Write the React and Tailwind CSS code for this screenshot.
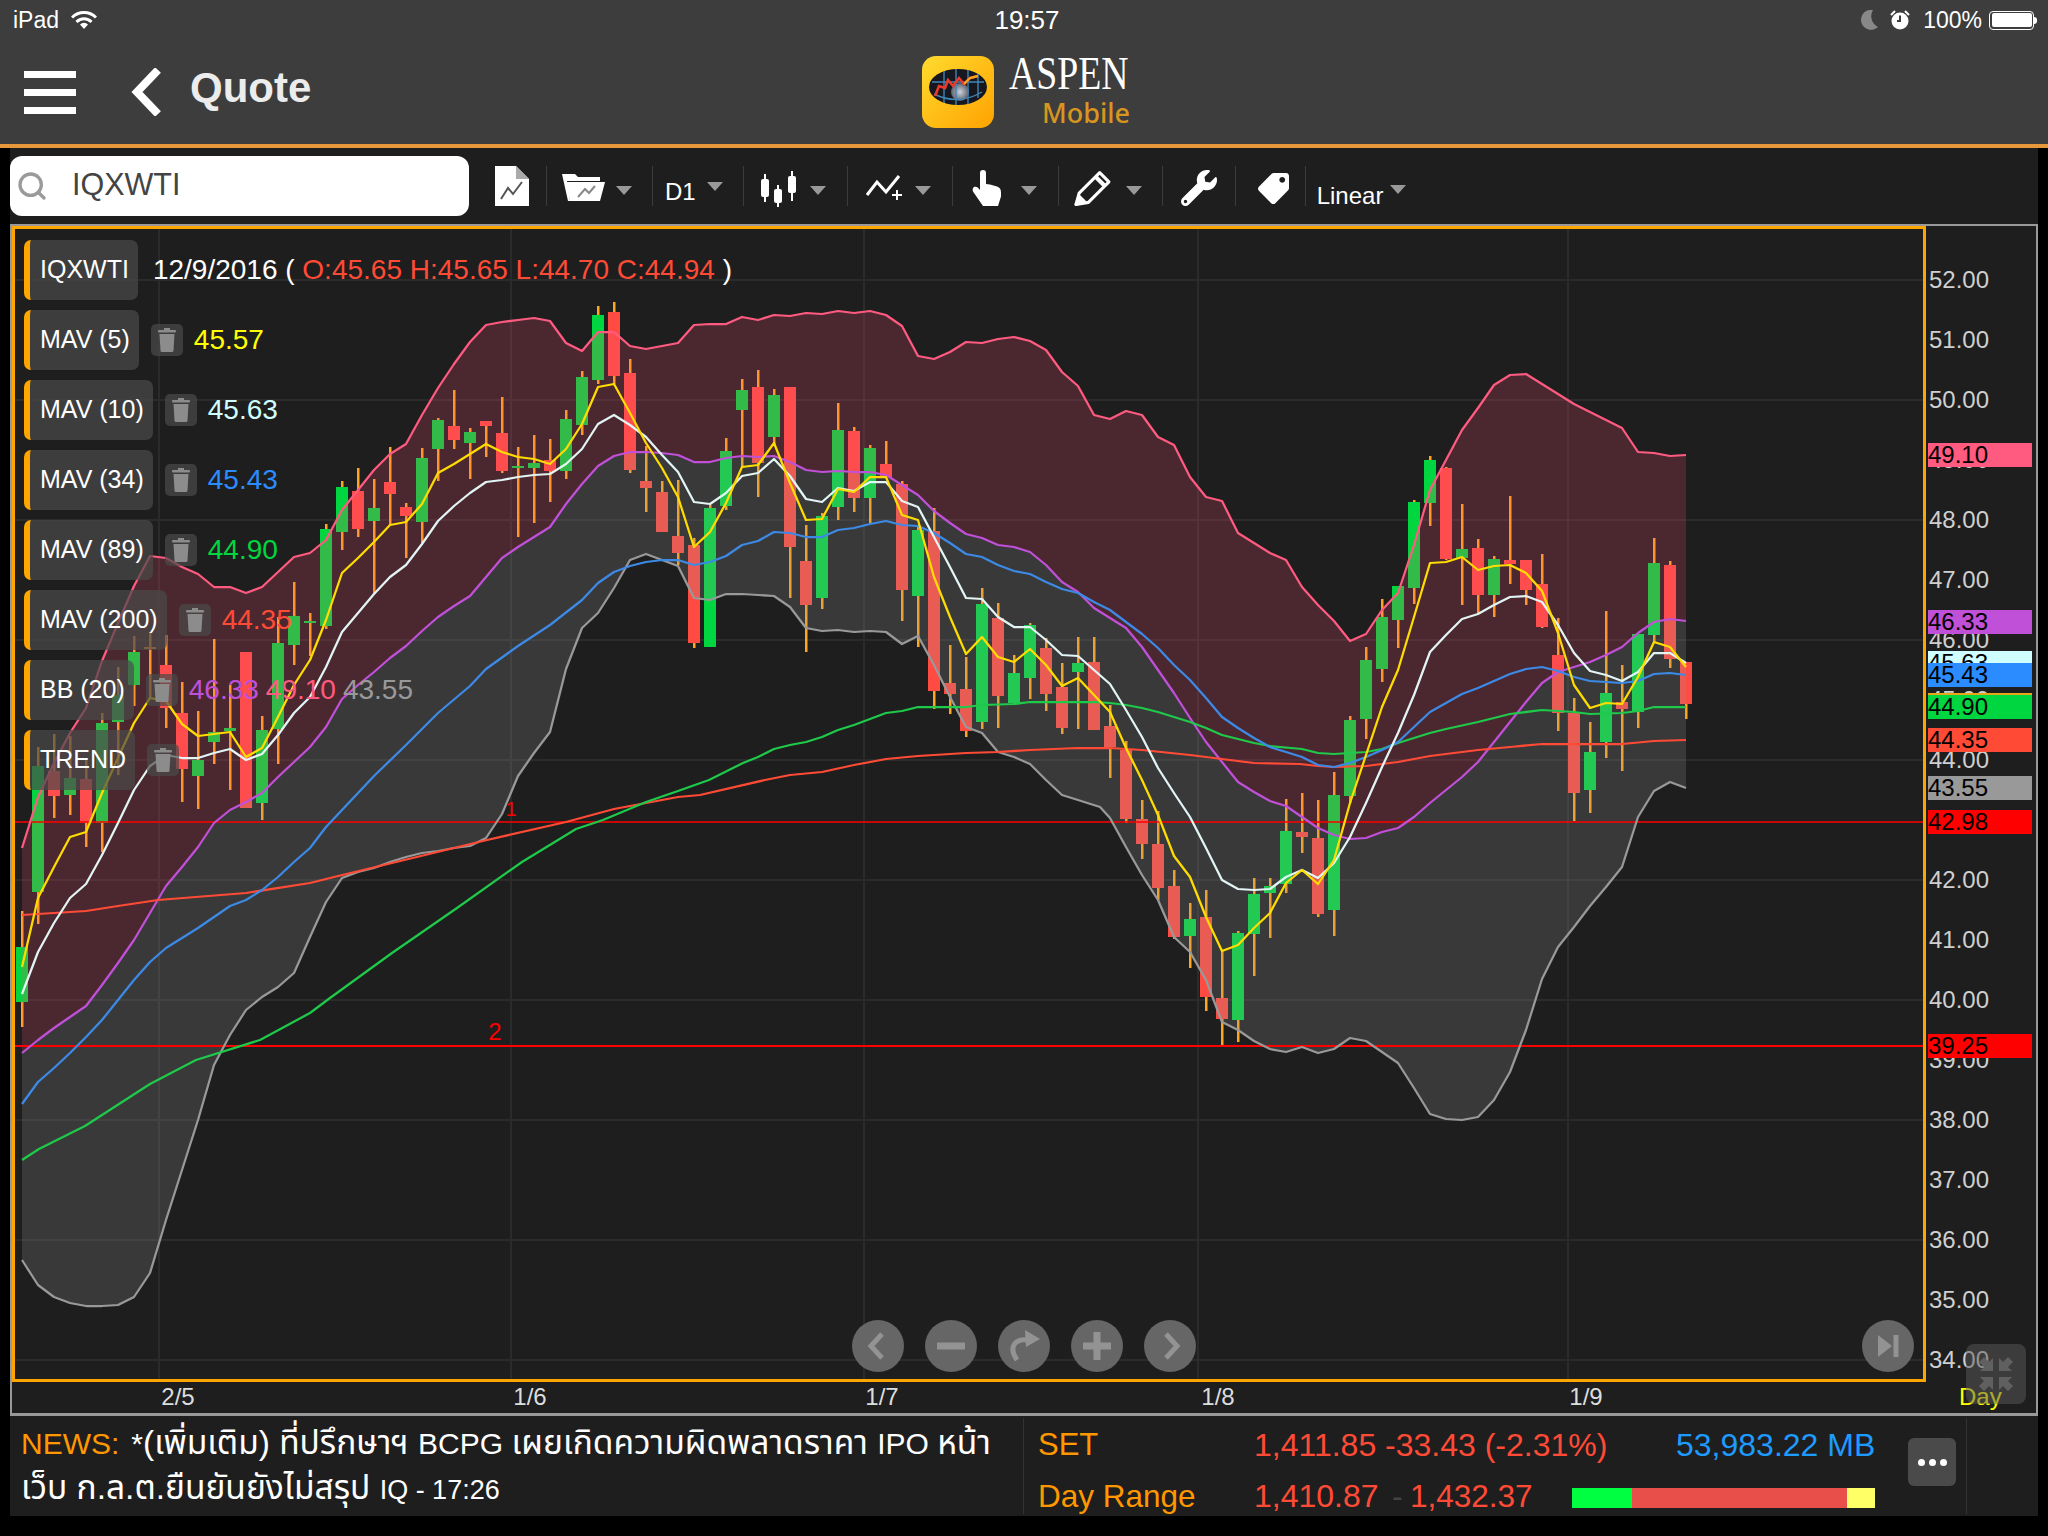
import { Search } from 'lucide-react';
import { FaWrench, FaTag } from 'react-icons/fa';

// page pixel data, read off the chart: [type, bodyTop, bodyBottom, wickTop, wickBottom]  1 green, 0 red, 2 doji
const CANDLES = [
  [1,947,1002,911,1027],[1,766,892,747,924],[0,771,796,734,818],[1,778,795,736,815],[0,779,823,760,847],
  [1,723,823,713,852],[1,695,722,667,775],[1,652,685,636,706],[2,647,649,632,697],[0,665,708,635,728],
  [0,713,769,682,802],[1,760,776,711,809],[1,732,742,639,764],[1,728,731,685,790],[0,652,808,652,808],
  [1,730,803,716,820],[1,643,729,617,764],[1,616,645,582,665],[1,621,623,613,656],[1,529,626,524,629],
  [1,487,532,481,550],[0,491,529,468,537],[1,508,521,479,594],[0,482,494,447,525],[0,507,516,503,558],
  [1,458,522,448,543],[1,420,449,418,481],[0,426,440,390,449],[1,432,443,428,479],[0,421,426,421,457],
  [0,433,471,397,473],[1,466,468,447,537],[1,463,468,435,523],[0,460,471,439,502],[1,419,471,410,479],
  [1,377,425,371,435],[1,315,380,306,384],[0,312,376,302,384],[0,373,470,359,473],[0,481,488,446,512],
  [0,492,532,481,532],[0,536,553,480,565],[0,545,643,538,648],[1,508,647,505,647],[1,451,506,438,510],
  [1,390,410,379,467],[0,387,463,370,497],[1,395,437,389,445],[0,387,547,387,598],[0,561,605,525,652],
  [1,516,598,513,609],[1,430,507,403,520],[0,431,498,427,512],[1,448,498,445,523],[0,464,477,441,477],
  [0,484,590,481,621],[1,530,596,527,647],[0,531,691,508,709],[0,683,694,645,714],[0,689,731,657,737],
  [1,604,722,588,729],[0,618,696,603,728],[1,673,703,655,705],[1,625,678,623,699],[0,648,694,638,711],
  [0,687,728,663,734],[1,663,672,637,729],[0,662,730,637,730],[0,726,747,705,778],[0,750,819,741,823],
  [0,819,844,800,859],[0,844,888,811,900],[0,886,937,870,939],[1,919,936,903,968],[0,917,997,890,1011],
  [0,998,1019,950,1045],[1,933,1020,931,1042],[1,894,934,878,976],[1,886,893,878,938],[1,831,884,799,893],
  [0,832,837,793,853],[0,838,914,800,917],[1,795,910,772,936],[1,720,796,716,803],[1,660,719,647,739],
  [1,617,669,599,682],[1,586,620,586,648],[1,502,588,500,604],[1,460,503,456,526],[0,468,559,467,560],
  [1,549,558,504,605],[0,548,595,539,614],[1,559,595,556,617],[0,560,564,496,584],[0,560,590,560,605],
  [0,584,627,554,628],[0,655,713,618,731],[0,713,793,698,821],[1,752,790,722,813],[1,693,742,611,758],
  [0,702,709,665,771],[1,634,712,634,728],[1,563,635,538,643],[0,565,659,561,668],[0,662,704,662,719],
];

const UPPER = '22,848 38,797 54,763 70,733 86,708 102,661 118,623 134,586 150,556 166,558 182,567 198,574 214,587 230,587 246,593 262,587 278,572 294,557 310,553 326,540 342,510 358,490 374,470 390,454 406,444 422,415 438,388 454,364 470,342 486,325 502,322 518,320 534,318 550,321 566,343 582,351 598,332 614,332 630,346 646,349 662,346 678,343 694,325 710,324 726,324 742,317 758,320 774,315 790,316 806,313 822,314 838,311 854,313 870,311 886,315 902,326 918,356 934,359 950,352 966,342 982,343 998,339 1014,337 1030,341 1046,350 1062,372 1078,386 1094,415 1110,419 1126,411 1142,415 1158,437 1174,445 1190,477 1206,497 1222,501 1238,533 1254,543 1270,553 1286,560 1302,587 1318,605 1334,621 1350,641 1366,634 1382,610 1398,593 1414,545 1430,490 1446,460 1462,430 1478,408 1494,385 1510,375 1526,374 1542,384 1558,394 1574,404 1590,412 1606,420 1622,428 1638,452 1654,453 1670,456 1686,455';
const MID = '22,1053 38,1040 54,1028 70,1017 86,1006 102,985 118,963 134,940 150,913 166,886 182,867 198,847 214,823 230,810 246,802 262,793 278,777 294,762 310,747 326,727 342,699 358,685 374,672 390,658 406,646 422,631 438,617 454,606 470,596 486,577 502,558 518,547 534,537 550,527 566,504 582,484 598,466 614,456 630,452 646,452 662,453 678,455 694,462 710,462 726,458 742,456 758,457 774,456 790,462 806,470 822,472 838,471 854,472 870,472 886,475 902,485 918,495 934,511 950,523 966,534 982,538 998,545 1014,547 1030,552 1046,565 1062,582 1078,592 1094,608 1110,618 1126,628 1142,647 1158,670 1174,693 1190,718 1206,742 1222,762 1238,782 1254,792 1270,801 1286,806 1302,817 1318,828 1334,835 1350,839 1366,838 1382,832 1398,828 1414,817 1430,803 1446,790 1462,777 1478,762 1494,742 1510,722 1526,702 1542,683 1558,672 1574,667 1590,662 1606,655 1622,647 1638,633 1654,622 1670,619 1686,621';
const LOWER = '22,1260 38,1285 54,1297 70,1303 86,1306 102,1306 118,1305 134,1297 150,1273 166,1220 182,1170 198,1120 214,1065 230,1035 246,1010 262,997 278,987 294,973 310,937 326,902 342,878 358,872 374,868 390,862 406,857 422,853 438,851 454,848 470,846 486,838 502,814 518,776 534,753 550,732 566,669 582,628 598,613 614,588 630,560 646,554 662,560 678,566 694,598 710,600 726,594 742,594 758,595 774,596 790,607 806,628 822,631 838,630 854,632 870,631 886,632 902,644 918,636 934,665 950,697 966,727 982,733 998,752 1014,757 1030,764 1046,780 1062,795 1078,800 1100,807 1110,818 1126,847 1142,875 1158,900 1174,937 1190,952 1206,980 1222,1022 1238,1030 1254,1041 1270,1049 1286,1052 1302,1047 1318,1053 1334,1049 1350,1038 1366,1041 1382,1052 1398,1063 1414,1088 1430,1114 1446,1119 1462,1120 1478,1117 1494,1100 1510,1072 1526,1030 1542,979 1558,947 1574,927 1590,906 1606,887 1622,867 1638,817 1654,791 1670,782 1686,788';
const MAV5 = '22,967 38,898 54,867 70,837 86,832 102,793 118,758 134,723 150,698 166,701 182,724 198,736 214,734 230,732 246,757 262,748 278,717 294,685 310,660 326,620 342,573 358,558 374,542 390,525 406,522 422,504 438,473 454,464 470,454 486,444 502,452 518,457 534,459 550,464 566,449 582,424 598,387 614,384 630,413 646,443 662,468 678,497 694,547 710,532 726,503 742,467 758,465 774,443 790,483 806,520 822,519 838,489 854,492 870,477 886,477 902,515 918,520 934,577 950,617 966,654 982,637 998,657 1014,662 1030,649 1046,665 1062,686 1078,678 1094,695 1110,712 1126,748 1142,780 1158,815 1174,856 1190,877 1206,917 1222,951 1238,945 1254,928 1270,913 1286,883 1302,870 1318,884 1334,860 1350,803 1366,755 1382,707 1398,670 1414,617 1430,563 1446,562 1462,557 1478,570 1494,566 1510,565 1526,573 1542,591 1558,633 1574,685 1590,708 1606,703 1622,704 1638,677 1654,642 1670,647 1686,667';
const MAV10 = '22,994 38,952 54,923 70,898 86,884 102,855 118,823 134,790 150,766 166,755 182,758 198,758 214,753 230,749 246,760 262,754 278,735 294,713 310,697 326,667 342,632 358,613 374,594 390,577 406,565 422,544 438,521 454,506 470,493 486,482 502,480 518,477 534,475 550,474 566,464 582,449 598,424 614,415 630,425 646,437 662,455 678,472 694,502 710,504 726,493 742,476 758,473 774,459 790,476 806,499 822,502 838,488 854,491 870,482 886,482 902,501 918,507 934,537 950,567 966,598 982,599 998,617 1014,627 1030,627 1046,640 1062,655 1078,656 1094,670 1110,684 1126,710 1142,737 1158,768 1174,793 1190,817 1206,848 1222,880 1238,889 1254,890 1270,889 1286,877 1302,870 1318,878 1334,863 1350,837 1366,803 1382,767 1398,733 1414,695 1430,652 1446,635 1462,619 1478,614 1494,605 1510,597 1526,596 1542,602 1558,625 1574,653 1590,671 1606,675 1622,681 1638,672 1654,653 1670,653 1686,663';
const MAV34 = '22,1104 38,1082 54,1068 70,1053 86,1037 102,1020 118,1000 134,980 150,962 166,948 182,938 198,928 214,917 230,906 246,900 262,890 278,877 294,862 310,848 326,827 342,810 374,776 406,745 438,713 470,686 486,669 518,646 550,625 582,600 598,583 614,572 630,566 646,562 662,560 678,560 694,565 710,562 726,556 742,545 758,541 774,532 790,533 806,537 822,537 838,530 854,528 870,524 886,521 902,525 918,526 934,533 950,543 966,554 982,557 998,565 1014,571 1030,574 1046,582 1062,589 1078,593 1094,602 1110,610 1126,622 1142,634 1158,648 1174,665 1190,680 1206,698 1222,717 1238,728 1254,738 1270,747 1286,752 1302,757 1318,765 1334,767 1350,763 1366,757 1382,750 1398,742 1414,727 1430,712 1446,703 1462,694 1478,688 1494,681 1510,674 1526,669 1542,667 1558,671 1574,677 1590,681 1606,682 1622,683 1638,681 1654,674 1670,673 1686,675';
const MAV89 = '22,1160 39,1149 85,1126 150,1084 196,1060 260,1040 310,1013 330,998 392,953 457,908 522,862 576,829 603,820 646,802 678,791 709,780 743,763 758,757 774,749 790,745 806,742 822,737 838,730 854,725 870,719 886,713 902,711 918,707 966,707 982,705 1014,704 1030,702 1094,702 1110,703 1126,705 1142,708 1158,712 1174,717 1190,722 1206,728 1222,735 1238,739 1254,743 1270,746 1302,749 1318,753 1334,754 1366,752 1382,749 1398,743 1414,738 1430,733 1446,729 1478,722 1510,714 1542,710 1574,712 1590,714 1622,713 1638,711 1654,707 1686,707';
const MAV200 = '22,915 86,911 118,906 158,900 246,893 310,883 330,878 487,840 566,822 614,809 678,797 700,795 765,780 790,775 822,772 854,765 886,759 918,756 966,753 998,752 1030,750 1078,748 1110,748 1142,750 1190,755 1222,759 1254,763 1300,764 1318,766 1334,767 1366,766 1398,762 1430,756 1478,750 1510,747 1542,744 1574,744 1622,744 1654,741 1686,740';

const band = (a, b) => `${a} ${b.split(' ').reverse().join(' ')}`;
const priceY = (p) => 280 + (52 - p) * 60;

const GRID_X = [159, 511, 864, 1198, 1568];
const GRID_PRICES = [52, 50, 48, 46, 44, 42, 40, 38, 36, 34];
const AXIS_PRICES = [52, 51, 50, 49, 48, 47, 46, 45, 44, 43, 42, 41, 40, 39, 38, 37, 36, 35, 34];
const PRICE_TAGS = [
  ['49.10', 455, 'bg-[#ff5a80]'],
  ['46.33', 622, 'bg-[#c050d8]'],
  ['45.63', 663, 'bg-[#d0ffff]'],
  ['45.43', 675, 'bg-[#2a8cff]'],
  ['44.94', 705, 'bg-[#e6a817]'],
  ['44.90', 707, 'bg-[#00d63f]'],
  ['44.35', 740, 'bg-[#ff4b36]'],
  ['43.55', 788, 'bg-[#999999]'],
  ['42.98', 822, 'bg-[#ff0000]'],
  ['39.25', 1046, 'bg-[#ff0000]'],
];
const DATE_LABELS = [['2/5', 178], ['1/6', 530], ['1/7', 882], ['1/8', 1218], ['1/9', 1586]];

// ============ ICONS ============
function Caret() {
  return (
    <svg width="16" height="9" viewBox="0 0 16 9"><path d="M0 0h16L8 9z" fill="#999" /></svg>
  );
}

function DocIcon() {
  return (
    <svg width="34" height="40" viewBox="0 0 34 40">
      <path d="M0 0h21l13 13v27H0z" fill="#fff" />
      <path d="M21 0v13h13z" fill="#aaa" />
      <polyline points="6,33 13,22 18,28 27,16" fill="none" stroke="#555" strokeWidth="2" />
    </svg>
  );
}

function FolderIcon() {
  return (
    <svg width="43" height="30" viewBox="0 0 43 30">
      <path d="M0 3h13l3 3h22v4H5l3 20H6z" fill="#fff" />
      <path d="M3 11h40l-5 19H8z" fill="#fff" />
      <polyline points="16,26 23,18 27,22 33,15" fill="none" stroke="#888" strokeWidth="2" />
    </svg>
  );
}

function CandleIcon() {
  return (
    <svg width="35" height="36" viewBox="0 0 35 36" fill="#fff">
      <rect x="3" y="3" width="2" height="28" />
      <rect x="0" y="8" width="8" height="18" rx="2" />
      <rect x="16" y="14" width="2" height="22" />
      <rect x="13" y="18" width="8" height="14" rx="2" />
      <rect x="30" y="0" width="2" height="30" />
      <rect x="27" y="5" width="8" height="17" rx="2" />
    </svg>
  );
}

function LineToolIcon() {
  return (
    <svg width="38" height="26" viewBox="0 0 38 26" fill="none" stroke="#fff" strokeWidth="3">
      <polyline points="1,20 11,7 20,17 33,1" />
      <path d="M31 15v10M26 20h10" strokeWidth="2" />
    </svg>
  );
}

function HandIcon() {
  return (
    <svg width="30" height="36" viewBox="0 0 30 36" fill="#fff">
      <path d="M8 3a3 3 0 0 1 6 0v11l4 .5 7 2c3 1 4 3 4 6v4l-3 9.500H11L2 23c-2-2.500-1.500-5 0-6 2-1 4 0 6 3z" />
    </svg>
  );
}

function PencilIcon() {
  return (
    <svg width="38" height="38" viewBox="0 0 37 36" fill="none" stroke="#fff" strokeWidth="3" strokeLinejoin="round">
      <path d="M2 34l3-11L25 3l9 9-20 20z" />
      <path d="M21 7l9 9" strokeWidth="4" />
      <path d="M2 34l3-8 5 5z" fill="#fff" />
    </svg>
  );
}

function TrashIcon() {
  return (
    <svg width="18" height="24" viewBox="0 0 18 24" fill="#8c8c8c">
      <rect x="0" y="2" width="18" height="2.5" rx="1" />
      <rect x="6" y="0" width="6" height="2" />
      <path d="M1.500 6h15l-1 16.500a1.500 1.500 0 0 1-1.500 1.500H4a1.500 1.500 0 0 1-1.500-1.500z" />
    </svg>
  );
}

function LogoIcon() {
  return (
    <svg width="72" height="72" viewBox="0 0 72 72">
      <defs>
        <linearGradient id="logoBg" x1="0" y1="0" x2="1" y2="1">
          <stop offset="0" stopColor="#ffdb2e" />
          <stop offset="1" stopColor="#ffa200" />
        </linearGradient>
        <radialGradient id="logoBall" cx="0.5" cy="0.5" r="0.5">
          <stop offset="0" stopColor="#cdd2dc" />
          <stop offset="1" stopColor="#5d6270" />
        </radialGradient>
      </defs>
      <rect width="72" height="72" rx="14" fill="url(#logoBg)" />
      <ellipse cx="36" cy="31" rx="29" ry="18" fill="#17171f" />
      <circle cx="38" cy="36" r="9" fill="url(#logoBall)" />
      <path d="M22 15v32M34 13v36M46 14v34M56 18v24M10 26h52M12 38q24 12 48-2" fill="none" stroke="#3f86b8" strokeWidth="1.4" />
      <polyline points="13,40 17,30 23,32 26,24 31,30 37,22 42,28 48,22 56,20" fill="none" stroke="#e8392b" strokeWidth="2.6" />
      <polyline points="42,28 48,22 56,20" fill="none" stroke="#f7a11c" strokeWidth="2.4" />
    </svg>
  );
}

// ============ HEADER ============
function StatusBar() {
  return (
    <div className="h-[40px] grid grid-cols-3 items-center text-white">
      <div className="flex items-center pl-[13px] gap-[12px] text-[23px]">
        <span>iPad</span>
        <svg width="26" height="18" viewBox="0 0 26 18" fill="none" stroke="#fff" strokeWidth="3">
          <path d="M1 6.500a17 17 0 0 1 24 0" />
          <path d="M5.500 11a10.500 10.500 0 0 1 15 0" />
          <path d="M13 18l-4-4.500a5.500 5.500 0 0 1 8 0z" fill="#fff" stroke="none" />
        </svg>
      </div>
      <div className="text-center pl-[6px] text-[26px]">19:57</div>
      <div className="flex items-center justify-end pr-[11px] text-[23px]">
        <svg width="19" height="20" viewBox="0 0 19 20"><path d="M14 0a10 10 0 1 0 5 17A12 12 0 0 1 14 0z" fill="#888" /></svg>
        <svg className="ml-[12px]" width="20" height="20" viewBox="0 0 20 20">
          <circle cx="10" cy="11" r="8.500" fill="#fff" />
          <path d="M10 5.500V11h-3" fill="none" stroke="#3d3d3d" strokeWidth="2" />
          <path d="M1 5l4-4M19 5l-4-4" stroke="#fff" strokeWidth="2" />
        </svg>
        <span className="ml-[13px]">100%</span>
        <div className="ml-[7px] w-[45px] h-[19px] border border-white rounded-[4px] p-[1.5px]">
          <div className="w-full h-full bg-white rounded-[2px]" />
        </div>
        <div className="w-[3px] h-[7px] bg-white rounded-r-sm" />
      </div>
    </div>
  );
}

function NavBar() {
  return (
    <div className="h-[104px] flex items-center">
      <div className="w-[922px] flex items-center pl-[24px]">
        <div className="w-[52px] flex flex-col gap-[11px]">
          <div className="h-[7px] bg-white" />
          <div className="h-[7px] bg-white" />
          <div className="h-[7px] bg-white" />
        </div>
        <svg className="ml-[55px]" width="30" height="48" viewBox="0 0 30 48">
          <polyline points="27,2 6,24 27,46" fill="none" stroke="#fff" strokeWidth="8" />
        </svg>
        <span className="ml-[29px] mb-[10px] text-[42px] font-bold text-[#ececec]">Quote</span>
      </div>
      <LogoIcon />
      <div className="ml-[15px] w-[121px] h-[72px] flex flex-col items-end">
        <div className="-mt-[3px] h-[45px] w-[121px] font-['Liberation_Serif',serif] text-[46px] leading-[42px] text-white origin-left scale-x-[0.82] whitespace-nowrap">ASPEN</div>
        <div className="font-['Noto_Sans',sans-serif] text-[27px] leading-[30px] text-[#d8951f] font-medium">Mobile</div>
      </div>
    </div>
  );
}

// ============ TOOLBAR ============
function Divider({ className = '' }) {
  return <div className={`w-px h-[40px] bg-[#3c3c3c] ${className}`} />;
}

function Toolbar() {
  return (
    <div className="h-[76px] flex items-center">
      <div className="w-[459px] h-[60px] bg-white rounded-[12px] flex items-center pl-[6px]">
        <Search size={32} color="#9a9a9a" strokeWidth={2.5} />
        <span className="ml-[24px] -mt-[2px] text-[30.5px] text-[#444]">IQXWTI</span>
      </div>
      <div className="ml-[26px]"><DocIcon /></div>
      <Divider className="ml-[17px]" />
      <div className="ml-[15px]"><FolderIcon /></div>
      <div className="ml-[11px] mt-[8px]"><Caret /></div>
      <Divider className="ml-[20px]" />
      <span className="ml-[12px] mt-[12px] text-[24px] text-white">D1</span>
      <div className="ml-[11px]"><Caret /></div>
      <Divider className="ml-[20px]" />
      <div className="ml-[17px] mt-[6px]"><CandleIcon /></div>
      <div className="ml-[14px] mt-[8px]"><Caret /></div>
      <Divider className="ml-[21px]" />
      <div className="ml-[18px] mt-[4px]"><LineToolIcon /></div>
      <div className="ml-[11px] mt-[8px]"><Caret /></div>
      <Divider className="ml-[21px]" />
      <div className="ml-[19px] mt-[4px]"><HandIcon /></div>
      <div className="ml-[19px] mt-[8px]"><Caret /></div>
      <Divider className="ml-[21px]" />
      <div className="ml-[15px] mt-[4px]"><PencilIcon /></div>
      <div className="ml-[14px] mt-[8px]"><Caret /></div>
      <Divider className="ml-[20px]" />
      <FaWrench className="ml-[18px] mt-[4px]" size={36} color="#fff" />
      <Divider className="ml-[18px]" />
      <FaTag className="ml-[22px] mt-[4px] rotate-90" size={31} color="#fff" />
      <Divider className="ml-[16px]" />
      <span className="ml-[11px] mt-[20px] text-[24px] text-white">Linear</span>
      <div className="ml-[7px] mt-[6px]"><Caret /></div>
    </div>
  );
}

// ============ CHART ============
function PriceChart() {
  return (
    <svg width="1908" height="1150" viewBox="15 229 1908 1150" className="block">
      {GRID_PRICES.map((p) => (
        <line key={p} x1="15" x2="1923" y1={priceY(p)} y2={priceY(p)} stroke="#2b2b2b" strokeWidth="2" />
      ))}
      {GRID_X.map((x) => (
        <line key={x} x1={x} x2={x} y1="229" y2="1379" stroke="#2b2b2b" strokeWidth="2" />
      ))}
      {CANDLES.map(([type, top, bottom, hi, lo], i) => {
        const x = 22 + 16 * i;
        const fill = type === 1 ? '#00d63f' : type === 0 ? '#ff4b41' : '#ffa51e';
        return (
          <g key={i}>
            <rect x={x - 1} y={hi} width="2.5" height={lo - hi} fill="#ffa51e" />
            <rect x={x - 6} y={top} width="12" height={bottom - top} fill={fill} />
          </g>
        );
      })}
      <polygon points={band(UPPER, MID)} fill="#ff5078" fillOpacity="0.2" />
      <polygon points={band(MID, LOWER)} fill="#999999" fillOpacity="0.22" />
      <line x1="15" x2="1923" y1="822" y2="822" stroke="#ff0000" strokeWidth="1.5" />
      <line x1="15" x2="1923" y1="1046" y2="1046" stroke="#ff0000" strokeWidth="2" />
      <g fill="none" strokeWidth="2.25" strokeLinejoin="round">
        <polyline points={LOWER} stroke="#999999" />
        <polyline points={UPPER} stroke="#ff5a80" />
        <polyline points={MID} stroke="#c050d8" />
        <polyline points={MAV200} stroke="#ff4b36" />
        <polyline points={MAV89} stroke="#1fc94a" />
        <polyline points={MAV34} stroke="#3d8ae6" />
        <polyline points={MAV10} stroke="#e2f4f4" />
        <polyline points={MAV5} stroke="#ffdc00" />
      </g>
      <text x="511" y="816" fill="#ff0000" fontSize="20" textAnchor="middle">1</text>
      <text x="495" y="1040" fill="#ff0000" fontSize="24" textAnchor="middle">2</text>
    </svg>
  );
}

function Chip({ children }) {
  return (
    <div className="h-[60px] flex items-center bg-[#4a4a4a]/70 rounded-[7px] border-l-[6px] border-[#ffa500] pl-[10px] pr-[9px] text-[25px] text-white whitespace-nowrap">
      {children}
    </div>
  );
}

function LegendRow({ label, children }) {
  return (
    <div className="flex items-center h-[60px]">
      <Chip>{label}</Chip>
      <div className="ml-[12px] w-[32px] h-[32px] bg-[#4a4a4a]/70 rounded-[5px] flex items-center justify-center"><TrashIcon /></div>
      <div className="ml-[11px] flex gap-[7px] text-[28px]">{children}</div>
    </div>
  );
}

function Legend() {
  return (
    <div className="absolute left-[9px] top-[11px] flex flex-col gap-[10px]">
      <div className="flex items-center h-[60px]">
        <Chip>IQXWTI</Chip>
        <div className="ml-[15px] text-[28px] text-white whitespace-pre">
          12/9/2016 ( <span className="text-[#ff4b36]">O:45.65 H:45.65 L:44.70 C:44.94</span> )
        </div>
      </div>
      <LegendRow label="MAV (5)"><span className="text-[#ffff00]">45.57</span></LegendRow>
      <LegendRow label="MAV (10)"><span className="text-[#d0ffff]">45.63</span></LegendRow>
      <LegendRow label="MAV (34)"><span className="text-[#2a8cff]">45.43</span></LegendRow>
      <LegendRow label="MAV (89)"><span className="text-[#00d63f]">44.90</span></LegendRow>
      <LegendRow label="MAV (200)"><span className="text-[#ff4b36]">44.35</span></LegendRow>
      <LegendRow label="BB (20)">
        <span className="text-[#c050d8]">46.33</span>
        <span className="text-[#ff5a80]">49.10</span>
        <span className="text-[#999999]">43.55</span>
      </LegendRow>
      <LegendRow label="TREND" />
    </div>
  );
}

function RoundButton({ className = '', children }) {
  return (
    <div className={`w-[52px] h-[52px] rounded-full bg-[#666] flex items-center justify-center ${className}`}>
      <svg width="32" height="32" viewBox="0 0 32 32" fill="none" stroke="#939393" strokeWidth="5">{children}</svg>
    </div>
  );
}

function ChartControls() {
  return (
    <>
      <div className="absolute left-[837px] top-[1091px] flex gap-[21px]">
        <RoundButton><polyline points="20,4 9,16 20,28" /></RoundButton>
        <RoundButton><path d="M2 16h28" strokeWidth="7" /></RoundButton>
        <RoundButton>
          <path d="M9 30C0 17 7 8 20 10" strokeWidth="5" />
          <path d="M17 0l15 9-14 8z" fill="#939393" stroke="none" />
        </RoundButton>
        <RoundButton><path d="M16 2v28M2 16h28" strokeWidth="7" /></RoundButton>
        <RoundButton><polyline points="12,4 23,16 12,28" /></RoundButton>
      </div>
      <div className="absolute left-[1847px] top-[1091px]">
        <RoundButton>
          <path d="M6 5v22l14-11z" fill="#939393" stroke="none" />
          <path d="M24 5v22" strokeWidth="5" />
        </RoundButton>
      </div>
    </>
  );
}

function PriceAxis() {
  return (
    <div className="relative w-[110px] text-[24px] leading-[24px]">
      {AXIS_PRICES.map((p) => (
        <div key={p} className="absolute left-[3px] text-[#cfcfcf]" style={{ top: priceY(p) - 12 - 226 }}>{p}.00</div>
      ))}
      {PRICE_TAGS.map(([text, y, bg]) => (
        <div key={text} className={`absolute left-[2px] w-[104px] h-[24px] text-black ${bg}`} style={{ top: y - 12 - 226 }}>{text}</div>
      ))}
    </div>
  );
}

function DateAxis() {
  return (
    <div className="relative h-[31px] text-[24px] leading-[29px]">
      {DATE_LABELS.map(([label, x]) => (
        <div key={label} className="absolute -translate-x-1/2 text-[#dddddd]" style={{ left: x - 12 }}>{label}</div>
      ))}
      <div className="absolute left-[1947px] text-[#ffff00]">Day</div>
    </div>
  );
}

function ChartPanel() {
  return (
    <div className="relative h-[1192px] border-x-2 border-t-2 border-b-[3px] border-[#999]">
      <div className="flex h-[1156px]">
        <div className="relative w-[1914px] border-[3px] border-[#ffa500] overflow-hidden">
          <PriceChart />
          <Legend />
          <ChartControls />
        </div>
        <PriceAxis />
      </div>
      <DateAxis />
      <div className="absolute right-[10px] top-[1118px] w-[60px] h-[60px] bg-[#5a5a5a]/50 rounded-[8px] flex items-center justify-center">
        <svg width="40" height="40" viewBox="0 0 40 40" fill="#606060">
          <path d="M17 4v13H4l4-4-5-5 5-5 5 5zM23 4v13h13l-4-4 5-5-5-5-5 5zM17 36V23H4l4 4-5 5 5 5 5-5zM23 36V23h13l-4 4 5 5-5 5-5-5z" />
        </svg>
      </div>
    </div>
  );
}

// ============ BOTTOM BAR ============
function BottomBar() {
  return (
    <div className="h-[100px] flex text-[30px]">
      <div className="w-[1013px] pl-[11px] pt-[5px] leading-[44px] text-white whitespace-nowrap font-['Liberation_Sans','Noto_Sans_Thai','Noto_Sans','DejaVu_Sans',sans-serif]">
        <span className="text-[#ff9800]">NEWS:</span><span className="ml-[12px]">*</span>
        <span className="text-[33.5px]">(เพิ่มเติม) ที่ปรึกษาฯ </span>BCPG <span className="text-[33.5px]">เผยเกิดความผิดพลาดราคา </span>IPO <span className="text-[33.5px]">หน้า</span><br />
        <span className="text-[33.5px]">เว็บ ก.ล.ต.ยืนยันยังไม่สรุป </span><span className="text-[27px]">IQ - 17:26</span>
      </div>
      <div className="w-px my-[2px] bg-[#333]" />
      <div className="w-[884px] pl-[14px] pt-[3px] text-[32px] leading-[52px]">
        <div className="flex h-[51px]">
          <span className="w-[216px] text-[31px] text-[#ff9800]">SET</span>
          <span className="w-[422px] text-[#ff4b36]">1,411.85 -33.43 (-2.31%)</span>
          <span className="text-[#1e9bff]">53,983.22 MB</span>
        </div>
        <div className="flex h-[52px] items-center">
          <span className="w-[216px] text-[31.5px] text-[#ff9800]">Day Range</span>
          <span className="w-[138px] text-[#ff4b36]">1,410.87</span>
          <span className="w-[18px] text-[#444]">-</span>
          <span className="w-[162px] text-[31.5px] text-[#ff4b36]">1,432.37</span>
          <div className="w-[303px] h-[20px] flex mt-[4px]">
            <div className="w-[60px] bg-[#00ff41]" />
            <div className="w-[215px] bg-[#e94f4a]" />
            <div className="w-[28px] bg-[#ffff66]" />
          </div>
        </div>
      </div>
      <div className="mt-[22px] w-[48px] h-[48px] rounded-[6px] bg-[#4a4a4a] flex items-center justify-center gap-[4px]">
        <div className="w-[7px] h-[7px] rounded-full bg-white" />
        <div className="w-[7px] h-[7px] rounded-full bg-white" />
        <div className="w-[7px] h-[7px] rounded-full bg-white" />
      </div>
      <div className="ml-[10px] w-px my-[2px] bg-[#333]" />
    </div>
  );
}

export default function App() {
  return (
    <div className="w-[2048px] h-[1536px] bg-black flex flex-col font-['Liberation_Sans',sans-serif] overflow-hidden">
      <div className="h-[148px] bg-[#3d3d3d] border-b-4 border-[#e8973a]">
        <StatusBar />
        <NavBar />
      </div>
      <div className="mx-[10px] h-[1368px] bg-[#1e1e1e]">
        <Toolbar />
        <ChartPanel />
        <BottomBar />
      </div>
    </div>
  );
}
